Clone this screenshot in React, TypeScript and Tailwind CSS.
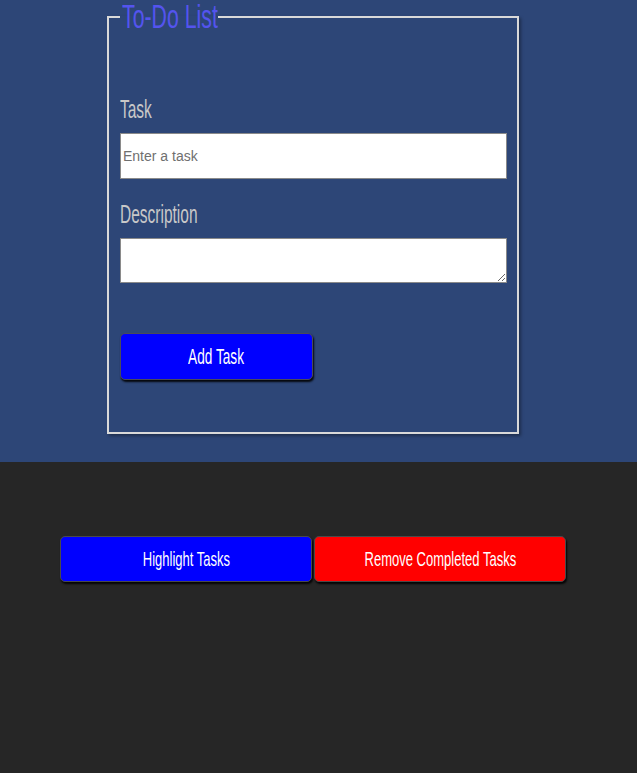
const font = "font-['Liberation_Sans',Arial,sans-serif]";

const Squeeze = ({ children, origin = "origin-left" }: { children: string; origin?: string }) => (
  <span className={`inline-block whitespace-nowrap scale-x-[0.62] ${origin}`}>{children}</span>
);

const App = () => {
  return (
    <div className={`min-h-screen bg-[#262626] ${font}`}>
      <div className="bg-[#2d4677] pb-[28px]">
        <fieldset className="ml-[107px] w-[412px] border-2 border-[#d9d9d9] pl-[11px] pr-[10px] pb-[52px] shadow-[2px_2px_3px_rgba(0,0,0,0.35)]">
          <legend className="pl-[2px] pr-[1px] text-[33px] leading-[34px] text-[#5454ee] whitespace-nowrap">
            <span className="inline-block origin-left scale-x-[0.645] -mr-[54px]">To-Do List</span>
          </legend>
          <label className="mt-[61px] block text-[25px] leading-[28px] text-[#c8c8c8]">
            <Squeeze>Task</Squeeze>
          </label>
          <input
            type="text"
            placeholder="Enter a task"
            className="mt-[10px] block h-[46px] w-full border border-[#8a8a8a] bg-white pl-[2px] text-[14px] text-black placeholder:text-[#6f6f6f] outline-none"
          />
          <label className="mt-[21px] block text-[25px] leading-[28px] text-[#c8c8c8]">
            <Squeeze>Description</Squeeze>
          </label>
          <textarea className="mt-[10px] block h-[45px] w-full border border-[#8a8a8a] bg-white outline-none" />
          <button className="mt-[50px] flex h-[47px] w-[193px] items-center justify-center rounded-[5px] border border-[#4a4a5a] bg-[#0000ff] text-[22px] text-white shadow-[1px_2px_2px_rgba(0,0,0,0.9)]">
            <Squeeze origin="origin-center">Add Task</Squeeze>
          </button>
        </fieldset>
      </div>
      <div className="flex pt-[74px] pl-[60px] gap-[2px]">
        <button className="flex h-[46px] w-[252px] items-center justify-center rounded-[5px] border border-[#4a4a4a] bg-[#0000ff] text-[21px] text-white shadow-[1px_2px_2px_rgba(0,0,0,0.9)]">
          <Squeeze origin="origin-center">Highlight Tasks</Squeeze>
        </button>
        <button className="flex h-[46px] w-[252px] items-center justify-center rounded-[5px] border border-[#4a4a4a] bg-[#ff0000] text-[21px] text-white shadow-[1px_2px_2px_rgba(0,0,0,0.9)]">
          <Squeeze origin="origin-center">Remove Completed Tasks</Squeeze>
        </button>
      </div>
    </div>
  );
};

export default App;
